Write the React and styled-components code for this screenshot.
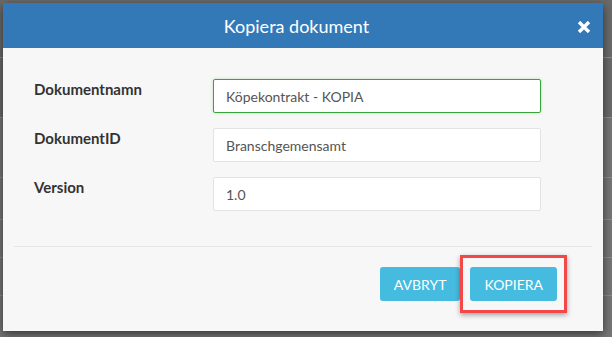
import React from 'react';
import styled, { createGlobalStyle } from 'styled-components';

const GlobalStyle = createGlobalStyle`
  html, body {
    margin: 0;
    padding: 0;
    width: 612px;
    height: 337px;
    overflow: hidden;
    font-family: Lato, "Open Sans", "Liberation Sans", sans-serif;
  }
`;

const Page = styled.div`
  position: relative;
  width: 612px;
  height: 337px;
  overflow: hidden;
  background: #747474;
`;

const Backdrop = styled.div`
  display: flex;
  flex-direction: column;
`;

const BackRow = styled.div`
  height: ${(p) => p.$h}px;
  background: ${(p) => (p.$dark ? '#6a6a6a' : '#767676')};
  border-bottom: 1px solid #8b8b8b;
  box-sizing: border-box;
`;

const Modal = styled.div`
  position: absolute;
  top: 3px;
  left: 3px;
  width: 600px;
  background: #f7f7f7;
  box-shadow: 0 3px 9px rgba(0, 0, 0, 0.55);
  display: flex;
  flex-direction: column;
`;

const Header = styled.div`
  position: relative;
  height: 45px;
  background: #3479b7;
  display: flex;
  align-items: center;
`;

const Title = styled.h4`
  flex: 1;
  margin: 0;
  padding-right: 13px;
  text-align: center;
  color: #fff;
  font-size: 18px;
  font-weight: 400;
  line-height: 22px;
`;

const Close = styled.button`
  position: absolute;
  right: 12px;
  top: 17px;
  width: 14px;
  height: 13px;
  padding: 0;
  border: none;
  background: none;
  display: flex;
  align-items: center;
  justify-content: center;
  cursor: pointer;
`;

const Body = styled.div`
  padding: 31px 62px 35px 31px;
  display: flex;
  flex-direction: column;
  gap: 15px;
`;

const Row = styled.div`
  display: flex;
  align-items: flex-start;
`;

const Label = styled.label`
  width: 179px;
  flex-shrink: 0;
  font-size: 15px;
  font-weight: 700;
  line-height: 20px;
  color: #333;
`;

const Input = styled.input`
  box-sizing: border-box;
  width: 328px;
  height: 34px;
  padding: 0 12px;
  font-family: inherit;
  font-size: 14px;
  color: #555;
  background: #fff;
  border: 1px solid ${(p) => (p.$focus ? '#3aa33a' : '#e3e3e3')};
  border-radius: 2px;
  box-shadow: ${(p) => (p.$focus ? '0 0 3px rgba(60, 170, 60, 0.35)' : 'none')};
  outline: none;
`;

const Footer = styled.div`
  margin: 0 11px;
  border-top: 1px solid #e5e5e5;
  padding: 20px 35px 30px 0;
  display: flex;
  justify-content: flex-end;
  gap: 10px;
`;

const Button = styled.button`
  height: 34px;
  padding: 0 14px;
  border: none;
  border-radius: 3px;
  background: #44bbdf;
  color: #fff;
  font-family: inherit;
  font-size: 14px;
  text-transform: uppercase;
  cursor: pointer;
`;

const Highlight = styled.div`
  position: relative;
  display: flex;

  &::after {
    content: '';
    position: absolute;
    top: -12px;
    bottom: -12px;
    left: -10px;
    right: -10px;
    border: 3px solid #f24848;
    box-shadow: 0 2px 5px rgba(0, 0, 0, 0.35);
    pointer-events: none;
  }
`;

const rows = [
  { h: 58, dark: true },
  { h: 60, dark: true },
  { h: 60 },
  { h: 42 },
  { h: 38 },
  { h: 38 },
  { h: 42 },
];

const fields = [
  { label: 'Dokumentnamn', value: 'Köpekontrakt - KOPIA', focus: true },
  { label: 'DokumentID', value: 'Branschgemensamt' },
  { label: 'Version', value: '1.0' },
];

export default function App() {
  return (
    <Page>
      <GlobalStyle />
      <Backdrop>
        {rows.map((r, i) => (
          <BackRow key={i} $h={r.h} $dark={r.dark} />
        ))}
      </Backdrop>
      <Modal>
        <Header>
          <Title>Kopiera dokument</Title>
          <Close aria-label="Stäng">
            <svg width="14" height="12" viewBox="0 0 14 12">
              <path d="M2 1 L12 11 M12 1 L2 11" stroke="#fff" strokeWidth="3.4" strokeLinecap="butt" />
            </svg>
          </Close>
        </Header>
        <Body>
          {fields.map((f) => (
            <Row key={f.label}>
              <Label>{f.label}</Label>
              <Input defaultValue={f.value} $focus={f.focus} />
            </Row>
          ))}
        </Body>
        <Footer>
          <Button>Avbryt</Button>
          <Highlight>
            <Button>Kopiera</Button>
          </Highlight>
        </Footer>
      </Modal>
    </Page>
  );
}
